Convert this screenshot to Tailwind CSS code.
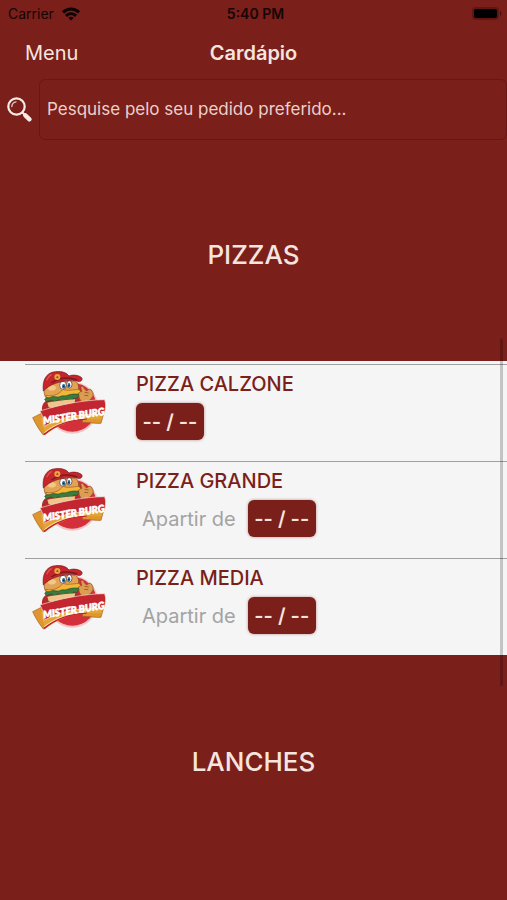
<!DOCTYPE html>
<html lang="pt-BR">
<head>
    <meta charset="utf-8"/>
    <meta content="width=device-width, initial-scale=1.0" name="viewport"/>
    <title>Cardápio</title>
    <script src="https://cdn.jsdelivr.net/npm/@tailwindcss/browser@4"></script>
</head>
<body class="relative min-h-screen bg-[#7a1f1a] font-['Inter',sans-serif] text-[#f6e4df] overflow-x-hidden">
    <!-- Logo shared by every row -->
    <svg class="hidden" aria-hidden="true">
        <symbol id="logo" viewBox="33 42 225 204">
            <circle cx="157" cy="158" r="78" fill="#f3c3c5"/>
            <circle cx="157" cy="157" r="73" fill="#d3303b"/>
            <path d="M66 166c-2-14 5-26 17-31l92-2 22 22-120 22z" fill="#b22a2b"/>
            <path d="M94 158c16-14 58-16 78-2l-4 14-70 8z" fill="#efb46c"/>
            <!-- hand -->
            <path d="M176 122c-2-8 2-15 9-12l-3-14c4-5 10-2 11 5l7 7c9-8 14-6 17 2 5 8 2 17-4 21-5 8-14 11-22 10-9-1-13-8-15-19z" fill="#dc9c51" stroke="#82431f" stroke-width="2"/>
            <path d="M194 112l12 2M193 121l12 1" stroke="#82431f" stroke-width="2"/>
            <!-- face -->
            <path d="M80 82c-9 14-10 33-3 45 15 12 75 12 92-3 10-17 9-39-3-46z" fill="#e3a357" stroke="#8b4b22" stroke-width="2"/>
            <path d="M81 98c5-10 22-11 28 0-5 11-22 12-28 0z" fill="#f4c783"/>
            <ellipse cx="129" cy="91" rx="10" ry="12" fill="#fff" stroke="#463128" stroke-width="2"/>
            <ellipse cx="148" cy="88" rx="8" ry="11" fill="#fff" stroke="#463128" stroke-width="2"/>
            <ellipse cx="131" cy="94" rx="5" ry="7" fill="#2e6c9c"/>
            <ellipse cx="147" cy="91" rx="4" ry="7" fill="#2e6c9c"/>
            <circle cx="131" cy="94" r="2" fill="#111"/>
            <circle cx="147" cy="91" r="2" fill="#111"/>
            <path d="M77 121c22 5 42-4 52-18 14 6 30 1 48 0l5 7-8 6 4 7c-22 10-78 10-98 7z" fill="#f3b738" stroke="#9b5722" stroke-width="2"/>
            <path d="M74 133c6-9 14-2 20-7 9-4 15 3 25-1 8-5 17 0 23-4 12-4 22-5 34-3l-3 12-12 0-10 7-11-5-12 7-12-5-12 6-10-5-15 5z" fill="#3d7a3d" stroke="#24502b" stroke-width="2"/>
            <path d="M82 143c25-5 61-9 84-10l-5 20c-21 8-56 11-75 4z" fill="#efc58a"/>
            <!-- cap -->
            <path d="M70 108c-4-31 8-56 36-58 24-2 35 5 41 13 12-6 36-1 39 7 2 6-5 12-12 9-20-6-46-2-67 6-12 3-27 13-37 23z" fill="#c4262c" stroke="#72191b" stroke-width="2"/>
            <path d="M94 84c20-14 48-20 78-9" fill="none" stroke="#7e191c" stroke-width="4"/>
            <path d="M80 76c4-10 9-15 15-18" fill="none" stroke="#e25350" stroke-width="4"/>
            <circle cx="112" cy="66" r="9" fill="#e7a93e"/>
            <path d="M108 68l4-6 4 6z" fill="#a8251f"/>
            <!-- ribbon -->
            <path d="M38 188l28-14 14 58-10 8c-12-15-23-32-32-52z" fill="#df962d" stroke="#a85c20" stroke-width="2"/>
            <path d="M190 176l62-4-9 33c-18 1-36-3-56-3z" fill="#df962d" stroke="#a85c20" stroke-width="2"/>
            <path d="M62 190l14 49c38-29 82-46 134-46l34 0 6-22z" fill="#e5a536"/>
            <path d="M60 168c60-19 128-33 194-34 5 15 3 29-2 44-62-3-122 4-180 36 0-17-3-32-12-46z" fill="#c3262f" stroke="#f2dfd6" stroke-width="2"/>
            <path d="M72 239c36-31 77-45 128-47" fill="none" stroke="#c3262f" stroke-width="5"/>
            <path d="M73 233c36-28 76-41 125-44" fill="none" stroke="#fff" stroke-width="2"/>
            <text x="71" y="208" transform="rotate(-9 71 208)" font-family="Lato, sans-serif" font-size="30" font-weight="900" font-style="italic" fill="#fff" stroke="#fff" stroke-width="2">MISTER BURG</text>
        </symbol>
    </svg>

    <!-- Status bar -->
    <div class="grid grid-cols-3 items-center h-7 pl-2 pr-1 text-sm text-[#160505]">
        <div class="flex items-center gap-2">
            <span>Carrier</span>
            <svg class="w-[18px] h-[14px]" viewBox="0 0 18 14" fill="none" stroke="#0c0303" stroke-width="3" aria-hidden="true">
                <path d="M1 5.4C5.6 1 12.4 1 17 5.4"/>
                <path d="M4 8.8c2.9-2.6 7.1-2.6 10 0"/>
                <path d="M9 13.5l-2.7-2.8c1.5-1.4 3.9-1.4 5.4 0z" fill="#0c0303" stroke="none"/>
            </svg>
        </div>
        <span class="text-center font-semibold">5:40 PM</span>
        <svg class="justify-self-end w-8 h-4" viewBox="0 0 32 16" aria-hidden="true">
            <rect x="1" y="1" width="27" height="13" rx="4" fill="#641512"/>
            <rect x="3" y="3" width="23" height="9" rx="2" fill="#000"/>
            <path d="M29 5c2 1 2 4 0 5z" fill="#4c100e"/>
        </svg>
    </div>

    <!-- Navigation -->
    <header class="grid grid-cols-3 items-center h-[50px] px-[25px] text-xl">
        <a class="justify-self-start" href="#menu">Menu</a>
        <h1 class="text-center font-semibold">Cardápio</h1>
    </header>

    <!-- Search -->
    <form class="flex items-center h-[70px] pb-2">
        <label class="w-[39px] pl-[6px] shrink-0" for="search" aria-label="Pesquisar">
            <svg class="w-[27px] h-[27px]" viewBox="0 0 27 27" fill="none" stroke-linecap="round" aria-hidden="true">
                <circle cx="10.5" cy="10.5" r="8.2" stroke="#f8ebe6" stroke-width="2.2"/>
                <path d="M5.8 10.5c.2-2.4 1.8-4.2 4.2-4.6" stroke="#e3beb8" stroke-width="1.4"/>
                <path d="M16.5 16.5l3 3" stroke="#f8ebe6" stroke-width="2"/>
                <path d="M19.3 19.3l4.2 4" stroke="#f8ebe6" stroke-width="4.4"/>
            </svg>
        </label>
        <input class="grow min-w-0 h-[61px] px-[7px] rounded-md border border-[#6a1713] text-[17px] placeholder:text-[#ecd0ca] focus:outline-none" id="search" type="text" placeholder="Pesquise pelo seu pedido preferido..."/>
    </form>

    <main>
        <h2 class="flex items-center justify-center h-[213px] text-[26px] font-medium">PIZZAS</h2>

        <ul class="bg-[#f5f5f5] pt-[3px] pl-[25px] text-[#7a1f1a]">
            <li class="flex h-[97px] border-t border-[#a0a0a0] pt-1 pl-[6px]">
                <svg class="w-[75px] h-[68px] shrink-0" role="img" aria-label="Mister Burg"><use href="#logo"/></svg>
                <div class="pl-[30px]">
                    <h3 class="text-xl leading-[30px] font-medium">PIZZA CALZONE</h3>
                    <div class="flex items-center pt-1">
                        <button class="w-[68px] h-[37px] rounded-md bg-[#7a1f1a] text-xl font-semibold text-[#f6e4df] shadow-[0_0_3px_#7a1f1a80]" type="button">-- / --</button>
                    </div>
                </div>
            </li>
            <li class="flex h-[97px] border-t border-[#a0a0a0] pt-1 pl-[6px]">
                <svg class="w-[75px] h-[68px] shrink-0" role="img" aria-label="Mister Burg"><use href="#logo"/></svg>
                <div class="pl-[30px]">
                    <h3 class="text-xl leading-[30px] font-medium">PIZZA GRANDE</h3>
                    <div class="flex items-center gap-3 pt-1 pl-[6px]">
                        <span class="text-xl text-[#a3a3a3]">Apartir de</span>
                        <button class="w-[68px] h-[37px] rounded-md bg-[#7a1f1a] text-xl font-semibold text-[#f6e4df] shadow-[0_0_3px_#7a1f1a80]" type="button">-- / --</button>
                    </div>
                </div>
            </li>
            <li class="flex h-[97px] border-t border-[#a0a0a0] pt-1 pl-[6px]">
                <svg class="w-[75px] h-[68px] shrink-0" role="img" aria-label="Mister Burg"><use href="#logo"/></svg>
                <div class="pl-[30px]">
                    <h3 class="text-xl leading-[30px] font-medium">PIZZA MEDIA</h3>
                    <div class="flex items-center gap-3 pt-1 pl-[6px]">
                        <span class="text-xl text-[#a3a3a3]">Apartir de</span>
                        <button class="w-[68px] h-[37px] rounded-md bg-[#7a1f1a] text-xl font-semibold text-[#f6e4df] shadow-[0_0_3px_#7a1f1a80]" type="button">-- / --</button>
                    </div>
                </div>
            </li>
        </ul>

        <h2 class="flex items-center justify-center h-[213px] text-[26px] font-medium">LANCHES</h2>
    </main>

    <!-- Scroll indicator -->
    <div class="absolute right-1 top-[338px] w-[3px] h-[348px] rounded-full bg-black/20"></div>
</body>
</html>
